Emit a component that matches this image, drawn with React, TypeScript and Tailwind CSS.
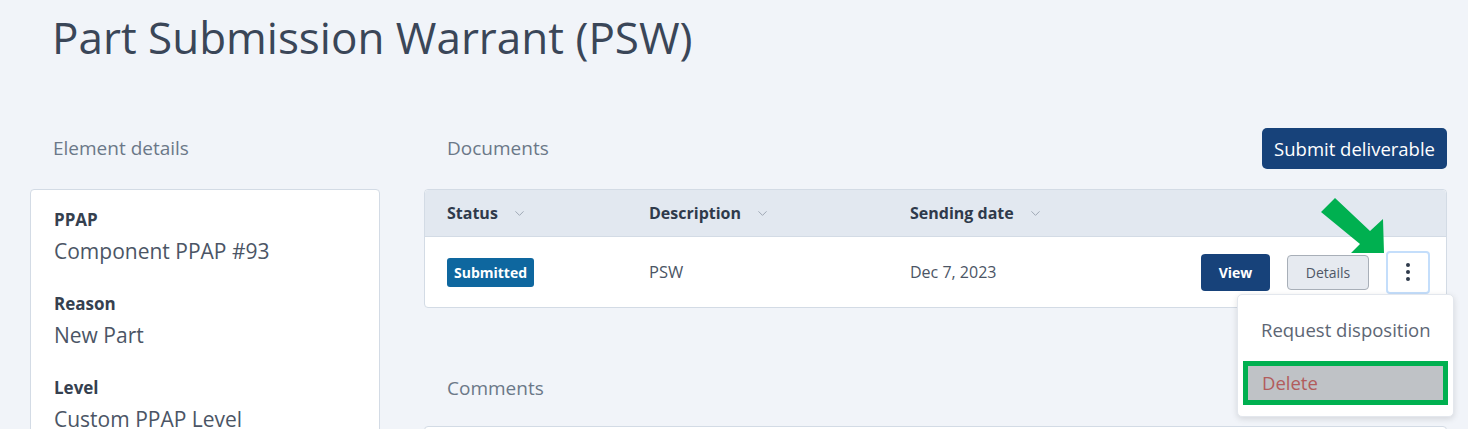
import { ChevronDown } from "lucide-react";

const font = { fontFamily: '"Open Sans", "Noto Sans", sans-serif' };

function DetailItem({ label, value }: { label: string; value: string }) {
  return (
    <div className="mb-[28px]">
      <p className="text-[17px] font-bold leading-[22px] text-[#35404f]">{label}</p>
      <p className="mt-[6px] text-[21px] leading-[28px] text-[#4b5565]">{value}</p>
    </div>
  );
}

function HeaderCell({ label }: { label: string }) {
  return (
    <div className="flex items-center gap-[14px]">
      <span className="text-[16px] font-bold text-[#2f3a4b]">{label}</span>
      <ChevronDown size={15} strokeWidth={1.5} className="text-[#9aa3b0]" />
    </div>
  );
}

export default function App() {
  return (
    <div className="min-h-[429px] overflow-hidden bg-[#f1f4f9] pl-[30px] pr-[21px]" style={font}>
      <h1 className="pl-[22px] pt-[8px] text-[44px] leading-[58px] text-[#3a4658]">
        Part Submission Warrant (PSW)
      </h1>

      <div className="mt-[62px] flex gap-[44px]">
        {/* left column */}
        <div className="w-[350px] shrink-0">
          <div className="flex h-[41px] items-center pl-[23px]">
            <span className="text-[19px] text-[#6b7888]">Element details</span>
          </div>
          <div className="mt-[20px] h-[300px] rounded-[4px] border border-[#d3dbe5] bg-white px-[23px] pt-[19px]">
            <DetailItem label="PPAP" value="Component PPAP #93" />
            <DetailItem label="Reason" value="New Part" />
            <DetailItem label="Level" value="Custom PPAP Level" />
          </div>
        </div>

        {/* right column */}
        <div className="flex-1">
          <div className="flex h-[41px] items-center justify-between">
            <span className="pl-[23px] text-[19px] text-[#6b7888]">Documents</span>
            <button
              type="button"
              className="h-[41px] rounded-[5px] bg-[#17427a] px-[12px] text-[18.5px] text-white"
            >
              Submit deliverable
            </button>
          </div>

          <div className="mt-[20px] rounded-[4px] border border-[#d3dbe5] bg-white">
            <div className="grid h-[47px] grid-cols-[202px_261px_1fr] items-center rounded-t-[4px] border-b border-[#d3dbe5] bg-[#e2e8f0] pl-[22px]">
              <HeaderCell label="Status" />
              <HeaderCell label="Description" />
              <HeaderCell label="Sending date" />
            </div>
            <div className="grid h-[70px] grid-cols-[202px_261px_1fr_auto] items-center pl-[22px] pr-[16px]">
              <div>
                <span className="inline-flex h-[29px] items-center rounded-[3px] bg-[#0e679f] px-[7px] text-[14px] font-bold text-white">
                  Submitted
                </span>
              </div>
              <span className="text-[16.5px] text-[#4b5565]">PSW</span>
              <span className="text-[16px] text-[#4b5565]">Dec 7, 2023</span>
              <div className="flex items-center gap-[17px]">
                <button
                  type="button"
                  className="h-[37px] w-[69px] rounded-[4px] bg-[#17427a] text-[14px] font-bold text-white"
                >
                  View
                </button>
                <button
                  type="button"
                  className="h-[35px] w-[82px] rounded-[4px] border border-[#a8afb8] bg-[#e6eaf0] text-[14px] text-[#4f5866]"
                >
                  Details
                </button>
                <div className="relative">
                  <button
                    type="button"
                    className="flex h-[43px] w-[44px] flex-col items-center justify-center gap-[3px] rounded-[4px] border-2 border-[#c4defb] bg-white"
                  >
                    <span className="h-[4px] w-[4px] rounded-full bg-[#2f3a4b]" />
                    <span className="h-[4px] w-[4px] rounded-full bg-[#2f3a4b]" />
                    <span className="h-[4px] w-[4px] rounded-full bg-[#2f3a4b]" />
                  </button>

                  {/* annotation arrow */}
                  <svg
                    className="absolute left-[-72px] top-[-57px]"
                    width="76"
                    height="64"
                    viewBox="0 0 76 64"
                  >
                    <polygon
                      points="7,18 21,4 56,37 69,25 70,59 37,59 46,50"
                      fill="#00b050"
                    />
                  </svg>

                  {/* dropdown menu */}
                  <div className="absolute left-[-149px] top-[43px] z-10 h-[123px] w-[217px] rounded-[5px] border border-[#e3e7ed] bg-white shadow-[0_2px_6px_rgba(0,0,0,0.12)]">
                    <div className="flex h-[52px] items-end pl-[23px] pb-[3px] text-[18.5px] text-[#5d6674]">
                      Request disposition
                    </div>
                    <div className="ml-[5px] mr-[5px] mt-[14px] border-[5px] border-[#00b050]">
                      <div className="flex h-[34px] items-center bg-[#bfc2c6] pl-[14px] text-[18.5px] text-[#b25c5c]">
                        Delete
                      </div>
                    </div>
                  </div>
                </div>
              </div>
            </div>
          </div>

          <div className="mt-[60px] flex h-[40px] items-center pl-[23px]">
            <span className="text-[19px] text-[#6b7888]">Comments</span>
          </div>
          <div className="mt-[18px] h-[40px] rounded-[4px] border border-[#d3dbe5] bg-white" />
        </div>
      </div>
    </div>
  );
}
